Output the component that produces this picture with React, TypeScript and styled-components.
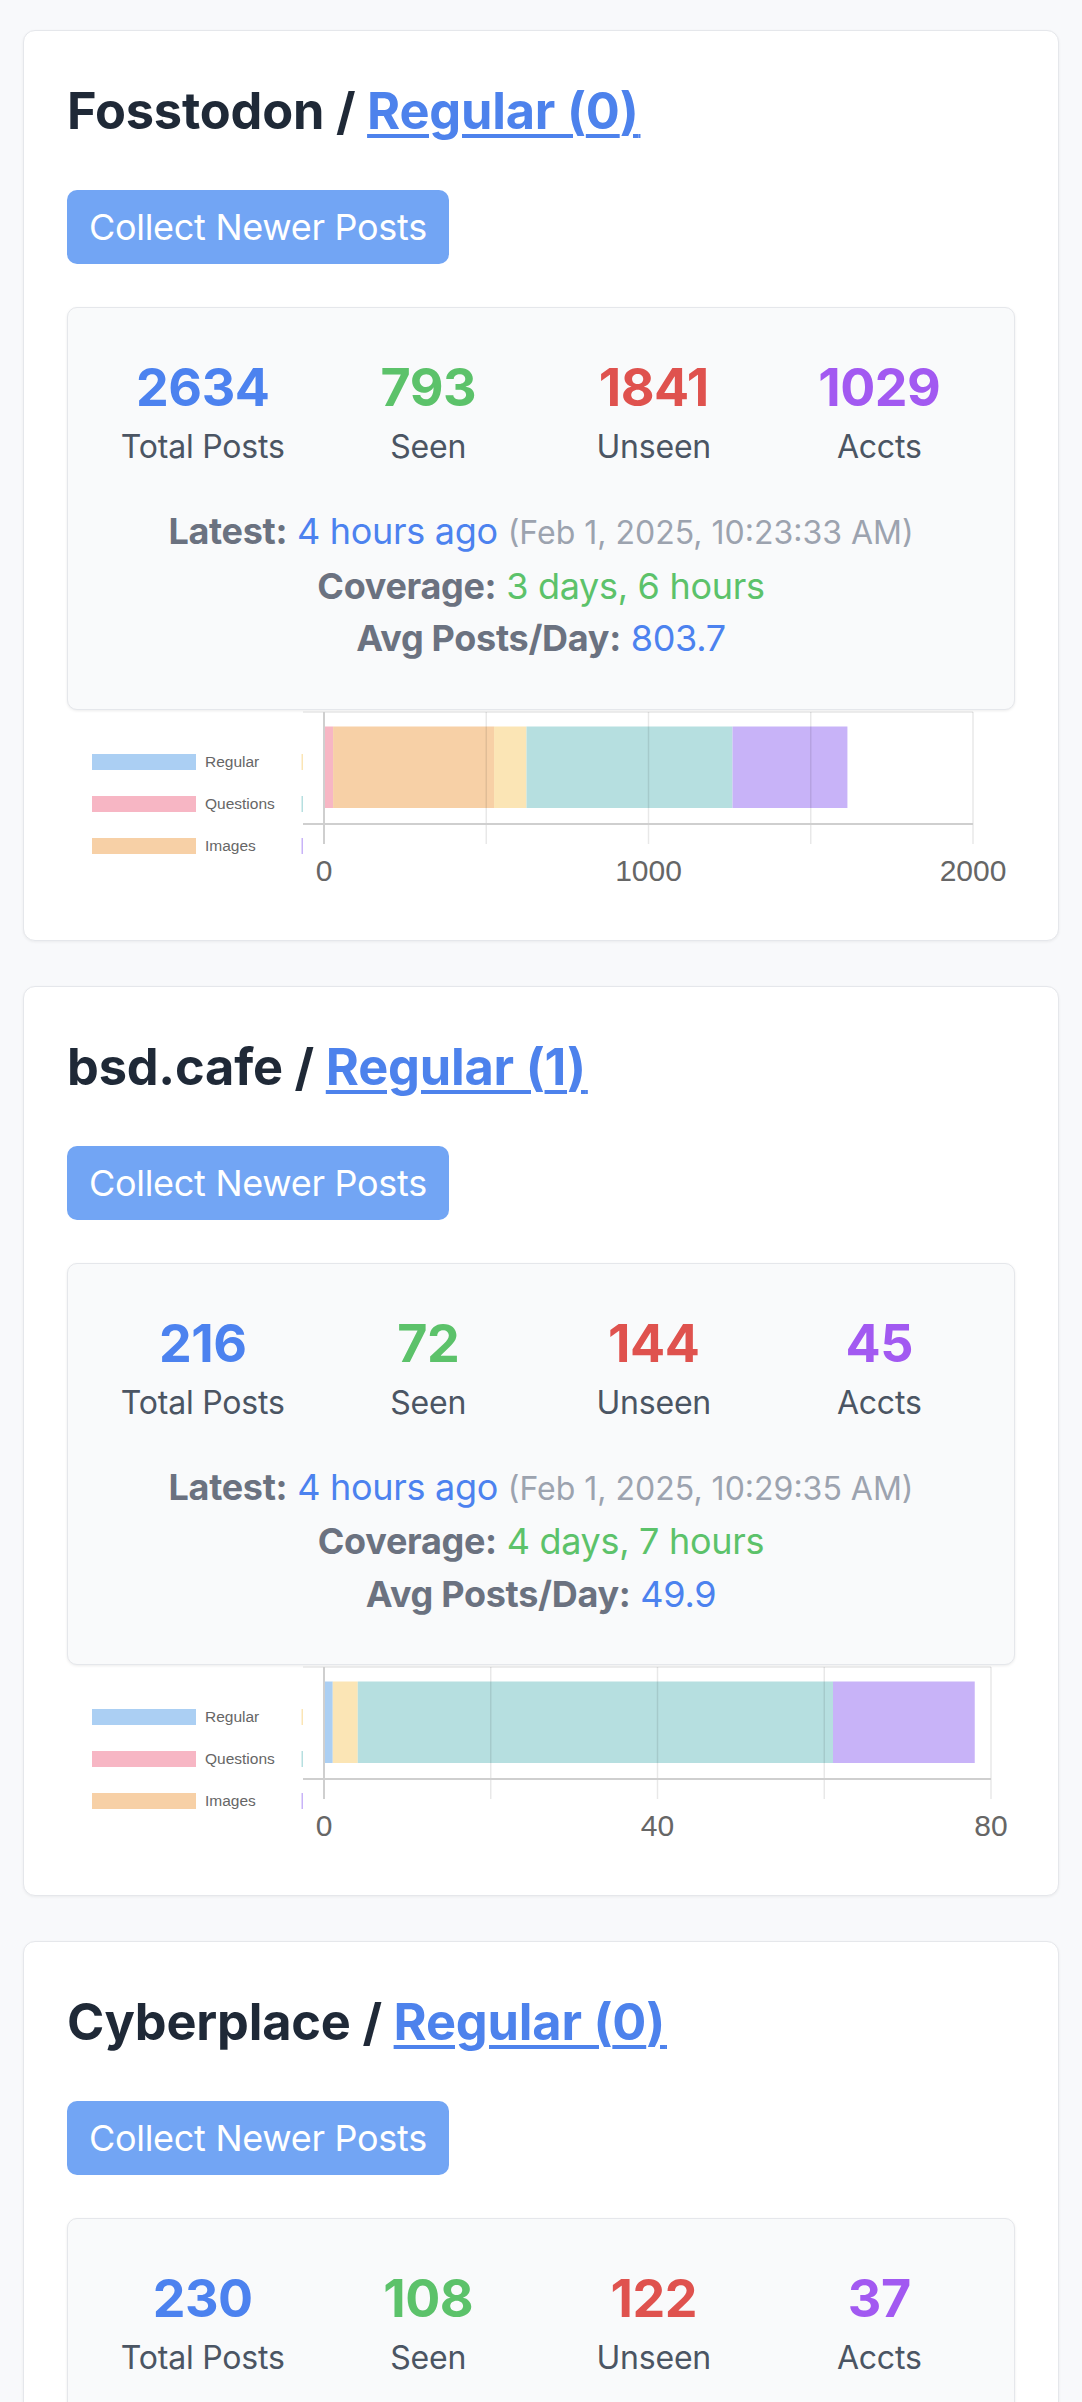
import React from 'react';
import styled, { createGlobalStyle } from 'styled-components';

const GlobalStyle = createGlobalStyle`
  html, body {
    margin: 0;
    padding: 0;
    background: #f8f9fb;
  }
  body {
    font-family: Inter, "Noto Sans", "Liberation Sans", sans-serif;
    -webkit-font-smoothing: antialiased;
  }
  * { box-sizing: border-box; }
`;

const Page = styled.main`
  padding: 30px 23px 60px;
  display: flex;
  flex-direction: column;
  gap: 45px;
`;

const Card = styled.section`
  background: #ffffff;
  border: 1px solid #e5e7eb;
  border-radius: 12px;
  box-shadow: 0 1px 3px rgba(0, 0, 0, 0.06);
  padding: 44px 43px 44px;
  display: flex;
  flex-direction: column;
`;

const Title = styled.h2`
  margin: 0;
  font-size: 50.5px;
  line-height: 72px;
  font-weight: 700;
  color: #1f2937;
  letter-spacing: -0.2px;
`;

const TitleLink = styled.a`
  color: #4d82ec;
  text-decoration: underline;
  text-decoration-thickness: 4px;
  text-underline-offset: 5px;
  cursor: pointer;
`;

const TrailingGap = styled.span`
  font-size: 9px;
  line-height: 0;
`;

const CollectButton = styled.button`
  align-self: flex-start;
  margin-top: 43px;
  background: #72a5f4;
  color: #ffffff;
  border: none;
  border-radius: 10px;
  font-family: Inter, "Noto Sans", "Liberation Sans", sans-serif;
  font-size: 36px;
  line-height: 54px;
  font-weight: 400;
  padding: 10px 22px;
  letter-spacing: -0.3px;
  cursor: pointer;
`;

const StatsBox = styled.div`
  margin-top: 43px;
  background: #f9fafb;
  border: 1px solid #e5e7eb;
  border-radius: 10px;
  box-shadow: 0 1px 3px rgba(0, 0, 0, 0.08);
  padding: 44px 22px 44px;
`;

const StatGrid = styled.div`
  display: grid;
  grid-template-columns: repeat(4, 1fr);
  text-align: center;
`;

const Stat = styled.div`
  display: flex;
  flex-direction: column;
  align-items: center;
`;

const StatValue = styled.div<{ $color: string }>`
  font-size: 52px;
  line-height: 72px;
  font-weight: 700;
  letter-spacing: -0.5px;
  color: ${(p) => p.$color};
`;

const StatLabel = styled.div`
  font-size: 32px;
  line-height: 45px;
  color: #4b5563;
  letter-spacing: -0.2px;
`;

const InfoBlock = styled.div`
  margin-top: 36px;
  text-align: center;
  font-size: 36px;
  line-height: 52.5px;
  color: #6b7280;
  letter-spacing: -0.3px;
`;

const InfoLine = styled.div``;

const InfoKey = styled.span`
  font-weight: 700;
  color: #6b7280;
`;

const InfoValue = styled.span<{ $color: string }>`
  color: ${(p) => p.$color};
`;

const InfoNote = styled.span`
  font-size: 32px;
  letter-spacing: 0;
  color: #9ca3af;
`;

const ChartWrap = styled.div`
  height: 186px;
`;

const ChartSvg = styled.svg`
  display: block;
  width: 100%;
  height: 186px;
`;

const BLUE = '#4c82ef';
const GREEN = '#5cc26a';
const RED = '#df524e';
const PURPLE = '#a259f1';

const C = {
  regular: '#abcff3',
  questions: '#f7b6c4',
  images: '#f7d0a6',
  yellow: '#fbe5b5',
  teal: '#b6dfe0',
  purple: '#c8b3f8',
};

type Seg = { color: string; value: number };
type ChartSpec = {
  max: number;
  gridStep: number;
  labelStep: number;
  plotRight: number;
  segments: Seg[];
};

type Instance = {
  name: string;
  regular: number;
  total: number;
  seen: number;
  unseen: number;
  accts: number;
  latest: string;
  stamp: string;
  coverage: string;
  avg: string;
  chart: ChartSpec;
};

const data: Instance[] = [
  {
    name: 'Fosstodon',
    regular: 0,
    total: 2634,
    seen: 793,
    unseen: 1841,
    accts: 1029,
    latest: '4 hours ago',
    stamp: '(Feb 1, 2025, 10:23:33 AM)',
    coverage: '3 days, 6 hours',
    avg: '803.7',
    chart: {
      max: 2000,
      gridStep: 500,
      labelStep: 1000,
      plotRight: 906,
      segments: [
        { color: C.questions, value: 28 },
        { color: C.images, value: 496 },
        { color: C.yellow, value: 100 },
        { color: C.teal, value: 635 },
        { color: C.purple, value: 354 },
      ],
    },
  },
  {
    name: 'bsd.cafe',
    regular: 1,
    total: 216,
    seen: 72,
    unseen: 144,
    accts: 45,
    latest: '4 hours ago',
    stamp: '(Feb 1, 2025, 10:29:35 AM)',
    coverage: '4 days, 7 hours',
    avg: '49.9',
    chart: {
      max: 80,
      gridStep: 20,
      labelStep: 40,
      plotRight: 924,
      segments: [
        { color: C.regular, value: 1.05 },
        { color: C.yellow, value: 3 },
        { color: C.teal, value: 57 },
        { color: C.purple, value: 17 },
      ],
    },
  },
  {
    name: 'Cyberplace',
    regular: 0,
    total: 230,
    seen: 108,
    unseen: 122,
    accts: 37,
    latest: '4 hours ago',
    stamp: '(Feb 1, 2025, 10:18:12 AM)',
    coverage: '3 days, 2 hours',
    avg: '74.2',
    chart: {
      max: 100,
      gridStep: 25,
      labelStep: 50,
      plotRight: 915,
      segments: [
        { color: C.questions, value: 2 },
        { color: C.images, value: 18 },
        { color: C.yellow, value: 9 },
        { color: C.teal, value: 44 },
        { color: C.purple, value: 15 },
      ],
    },
  },
];

const legend = [
  { label: 'Regular', color: C.regular, y: 44 },
  { label: 'Questions', color: C.questions, y: 86 },
  { label: 'Images', color: C.images, y: 128 },
];

const slivers = [
  { color: C.yellow, y: 44 },
  { color: C.teal, y: 86 },
  { color: C.purple, y: 128 },
];

function UsageChart({ spec }: { spec: ChartSpec }) {
  const x0 = 257;
  const xr = spec.plotRight;
  const k = (xr - x0) / spec.max;
  const gridTop = 2;
  const barTop = 16.5;
  const barBottom = 98;
  const axisY = 114;
  const tickBottom = 134;
  const labelY = 171;

  const grid: number[] = [];
  for (let v = spec.gridStep; v <= spec.max; v += spec.gridStep) grid.push(v);
  const labels: number[] = [];
  for (let v = 0; v <= spec.max; v += spec.labelStep) labels.push(v);

  let acc = 0;
  const rects = spec.segments.map((s, i) => {
    const x = x0 + acc * k;
    acc += s.value;
    const w = s.value * k;
    return <rect key={i} x={x} y={barTop} width={w} height={barBottom - barTop} fill={s.color} />;
  });

  return (
    <ChartWrap>
      <ChartSvg viewBox="0 0 948 186" preserveAspectRatio="none">
        {legend.map((l) => (
          <g key={l.label}>
            <rect x={25} y={l.y} width={104} height={16} fill={l.color} />
            <text
              x={138}
              y={l.y + 13}
              fontSize={15.5}
              fill="#666666"
              fontFamily='"Liberation Sans", Arial, sans-serif'
            >
              {l.label}
            </text>
          </g>
        ))}
        {slivers.map((s, i) => (
          <rect key={i} x={234.5} y={s.y} width={1.5} height={16} fill={s.color} />
        ))}
        {rects}
        <line x1={236} y1={gridTop} x2={xr} y2={gridTop} stroke="#e6e6e6" strokeWidth={1.5} />
        {grid.map((v) => (
          <line
            key={v}
            x1={x0 + v * k}
            y1={gridTop}
            x2={x0 + v * k}
            y2={tickBottom}
            stroke="rgba(0,0,0,0.09)"
            strokeWidth={1.5}
          />
        ))}
        <line x1={236} y1={axisY} x2={xr} y2={axisY} stroke="#cfcfcf" strokeWidth={2} />
        <line x1={x0} y1={gridTop} x2={x0} y2={tickBottom} stroke="#cfcfcf" strokeWidth={2} />
        {labels.map((v) => (
          <text
            key={v}
            x={x0 + v * k}
            y={labelY}
            fontSize={30}
            fill="#666666"
            textAnchor="middle"
            fontFamily='"Liberation Sans", Arial, sans-serif'
          >
            {v}
          </text>
        ))}
      </ChartSvg>
    </ChartWrap>
  );
}

function InstanceCard({ d }: { d: Instance }) {
  return (
    <Card>
      <Title>
        {d.name} /{' '}
        <TitleLink>
          Regular ({d.regular})<TrailingGap>&nbsp;</TrailingGap>
        </TitleLink>
      </Title>
      <CollectButton>Collect Newer Posts</CollectButton>
      <StatsBox>
        <StatGrid>
          <Stat>
            <StatValue $color={BLUE}>{d.total}</StatValue>
            <StatLabel>Total Posts</StatLabel>
          </Stat>
          <Stat>
            <StatValue $color={GREEN}>{d.seen}</StatValue>
            <StatLabel>Seen</StatLabel>
          </Stat>
          <Stat>
            <StatValue $color={RED}>{d.unseen}</StatValue>
            <StatLabel>Unseen</StatLabel>
          </Stat>
          <Stat>
            <StatValue $color={PURPLE}>{d.accts}</StatValue>
            <StatLabel>Accts</StatLabel>
          </Stat>
        </StatGrid>
        <InfoBlock>
          <InfoLine>
            <InfoKey>Latest:</InfoKey> <InfoValue $color={BLUE}>{d.latest}</InfoValue>{' '}
            <InfoNote>{d.stamp}</InfoNote>
          </InfoLine>
          <InfoLine>
            <InfoKey>Coverage:</InfoKey> <InfoValue $color={GREEN}>{d.coverage}</InfoValue>
          </InfoLine>
          <InfoLine>
            <InfoKey>Avg Posts/Day:</InfoKey> <InfoValue $color={BLUE}>{d.avg}</InfoValue>
          </InfoLine>
        </InfoBlock>
      </StatsBox>
      <UsageChart spec={d.chart} />
    </Card>
  );
}

export default function App() {
  return (
    <>
      <GlobalStyle />
      <Page>
        {data.map((d) => (
          <InstanceCard key={d.name} d={d} />
        ))}
      </Page>
    </>
  );
}
